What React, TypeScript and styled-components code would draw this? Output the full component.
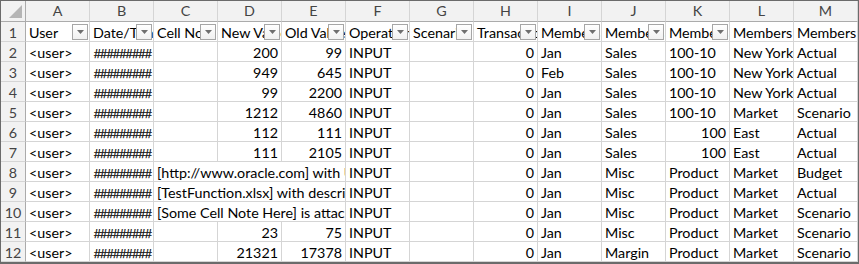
import React from "react";
import styled, { createGlobalStyle, css } from "styled-components";

const GlobalStyle = createGlobalStyle`
  html, body { margin: 0; padding: 0; background: #fff; }
  body { font-family: Lato, "Liberation Sans", sans-serif; }
`;

const Frame = styled.div`
  width: 859px;
  height: 264px;
  box-sizing: border-box;
  border: 1px solid #6b6b6b;
  border-bottom-width: 2px;
  overflow: hidden;
  background: #fff;
`;

const Grid = styled.div`
  display: grid;
  grid-template-columns: 25px repeat(13, 64px);
  grid-template-rows: 21px;
  grid-auto-rows: 20px;
  font-size: 14.3px;
  color: #000;
`;

const HeadBase = css`
  box-sizing: border-box;
  background: #f2f2f2;
  color: #444;
  text-align: center;
  line-height: 20px;
`;

const Corner = styled.div`
  ${HeadBase};
  border-right: 1px solid #ababab;
  border-bottom: 1px solid #ababab;
  display: flex;
  align-items: flex-end;
  justify-content: flex-end;
  padding: 0 3px 3px 0;
`;

const ColHead = styled.div`
  ${HeadBase};
  border-right: 1px solid #d5d5d5;
  border-bottom: 1px solid #ababab;
`;

const RowHead = styled.div`
  ${HeadBase};
  border-right: 1px solid #ababab;
  border-bottom: 1px solid #d5d5d5;
  line-height: 21px;
`;

const Cell = styled.div<{ $align?: "left" | "right"; $span?: number }>`
  box-sizing: border-box;
  position: relative;
  border-right: 1px solid #d5d5d5;
  border-bottom: 1px solid #d5d5d5;
  padding: 0 3px 0 3px;
  white-space: nowrap;
  overflow: hidden;
  line-height: 21px;
  text-align: ${(p) => p.$align ?? "left"};
  grid-column: ${(p) => (p.$span ? `span ${p.$span}` : "auto")};
`;

const Hash = styled.span`
  font-family: "Liberation Sans", sans-serif;
  font-size: 12px;
  letter-spacing: -0.3px;
  padding-left: 1px;
  -webkit-text-stroke: 0.25px #000;
`;

const FilterBtn = styled.span`
  position: absolute;
  right: 1px;
  top: 2px;
  width: 16px;
  height: 16px;
  box-sizing: border-box;
  border: 1px solid #a6a6a6;
  background: linear-gradient(#ffffff, #f1f1f1);
  display: flex;
  align-items: center;
  justify-content: center;
`;

const Caret = () => (
  <svg width="7" height="4" viewBox="0 0 7 4">
    <path d="M0 0h7L3.5 4z" fill="#6f6f6f" />
  </svg>
);

const CornerMark = () => (
  <svg width="13" height="13" viewBox="0 0 13 13">
    <path d="M13 0v13H0z" fill="#b5b5b5" />
  </svg>
);

const letters = "ABCDEFGHIJKLM".split("");

const headers: { label: string; filter: boolean }[] = [
  { label: "User", filter: true },
  { label: "Date/Time", filter: true },
  { label: "Cell Note", filter: true },
  { label: "New Value", filter: true },
  { label: "Old Value", filter: true },
  { label: "Operation", filter: true },
  { label: "Scenario", filter: true },
  { label: "Transaction", filter: true },
  { label: "Members", filter: true },
  { label: "Members", filter: true },
  { label: "Members", filter: true },
  { label: "Members", filter: false },
  { label: "Members", filter: false },
];

type Value = string | number | { hash: true } | { note: string };
const H: Value = { hash: true };

const rows: Value[][] = [
  ["<user>", H, "", 200, 99, "INPUT", "", 0, "Jan", "Sales", "100-10", "New York", "Actual"],
  ["<user>", H, "", 949, 645, "INPUT", "", 0, "Feb", "Sales", "100-10", "New York", "Actual"],
  ["<user>", H, "", 99, 2200, "INPUT", "", 0, "Jan", "Sales", "100-10", "New York", "Actual"],
  ["<user>", H, "", 1212, 4860, "INPUT", "", 0, "Jan", "Sales", "100-10", "Market", "Scenario"],
  ["<user>", H, "", 112, 111, "INPUT", "", 0, "Jan", "Sales", 100, "East", "Actual"],
  ["<user>", H, "", 111, 2105, "INPUT", "", 0, "Jan", "Sales", 100, "East", "Actual"],
  ["<user>", H, { note: "[http://www.oracle.com] with URL" }, "INPUT", "", 0, "Jan", "Misc", "Product", "Market", "Budget"],
  ["<user>", H, { note: "[TestFunction.xlsx] with description" }, "INPUT", "", 0, "Jan", "Misc", "Product", "Market", "Actual"],
  ["<user>", H, { note: "[Some Cell Note Here] is attached" }, "INPUT", "", 0, "Jan", "Misc", "Product", "Market", "Scenario"],
  ["<user>", H, "", 23, 75, "INPUT", "", 0, "Jan", "Misc", "Product", "Market", "Scenario"],
  ["<user>", H, "", 21321, 17378, "INPUT", "", 0, "Jan", "Margin", "Product", "Market", "Scenario"],
];

const renderValue = (v: Value, key: number) => {
  if (typeof v === "number") {
    return (
      <Cell key={key} $align="right">
        {v}
      </Cell>
    );
  }
  if (typeof v === "string") return <Cell key={key}>{v}</Cell>;
  if ("hash" in v) {
    return (
      <Cell key={key}>
        <Hash>#########</Hash>
      </Cell>
    );
  }
  return (
    <Cell key={key} $span={3}>
      {v.note}
    </Cell>
  );
};

export default function App() {
  return (
    <>
      <GlobalStyle />
      <Frame>
        <Grid>
          <Corner>
            <CornerMark />
          </Corner>
          {letters.map((l) => (
            <ColHead key={l}>{l}</ColHead>
          ))}

          <RowHead>1</RowHead>
          {headers.map((h, i) => (
            <Cell key={i}>
              {h.label}
              {h.filter && (
                <FilterBtn>
                  <Caret />
                </FilterBtn>
              )}
            </Cell>
          ))}

          {rows.map((r, ri) => (
            <React.Fragment key={ri}>
              <RowHead>{ri + 2}</RowHead>
              {r.map((v, ci) => renderValue(v, ci))}
            </React.Fragment>
          ))}
        </Grid>
      </Frame>
    </>
  );
}
